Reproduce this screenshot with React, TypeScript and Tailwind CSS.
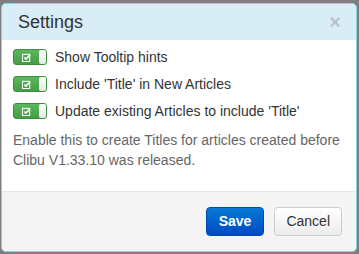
import { useState } from 'react';

const options = [
  'Show Tooltip hints',
  "Include 'Title' in New Articles",
  "Update existing Articles to include 'Title'",
];

function Toggle({ on, onClick }: { on: boolean; onClick: () => void }) {
  return (
    <button
      onClick={onClick}
      className={`flex h-[16px] w-[34px] overflow-hidden rounded-[3px] border ${on ? 'border-[#3e8f3e] bg-gradient-to-b from-[#5cb85c] to-[#449d44]' : 'border-[#ccc] bg-[#eee]'}`}
    >
      <span className="flex h-full w-[25px] items-center justify-center">
        <svg width="9" height="9" viewBox="0 0 10 10">
          <rect x="0.5" y="1.5" width="8" height="8" fill="none" stroke="#fff" strokeWidth="1.2" />
          <path d="M2.5 5 L4.3 6.8 L9 2" fill="none" stroke="#fff" strokeWidth="1.6" />
        </svg>
      </span>
      <span className="h-full flex-1 rounded-l-[2px] bg-gradient-to-b from-[#fff] to-[#e6e6e6]" />
    </button>
  );
}

export default function App() {
  const [checked, setChecked] = useState([true, true, true]);

  return (
    <div className="h-[254px] w-[359px] bg-[#7f7f7f] pt-[3px] pl-[1px] font-['Liberation_Sans',Arial,sans-serif]">
      <div className="flex h-[249px] w-[356px] flex-col overflow-hidden rounded-[5px] border border-[#7fd8e0] bg-white">
        <div className="flex h-[36px] items-center justify-between bg-[#d9edf7] pl-[16px] pr-[15px]">
          <span className="text-[18px] text-[#333]">Settings</span>
          <span className="text-[20px] font-bold leading-none text-[#b9c4ca]">×</span>
        </div>
        <div className="flex flex-1 flex-col gap-[11px] px-[11px] pt-[9px]">
          {options.map((label, i) => (
            <div key={label} className="flex h-[16px] items-center gap-[8px]">
              <Toggle on={checked[i]} onClick={() => setChecked(checked.map((c, j) => (j === i ? !c : c)))} />
              <span className="text-[14px] text-[#333]">{label}</span>
            </div>
          ))}
          <p className="text-[14px] leading-[20px] text-[#666]">
            Enable this to create Titles for articles created before Clibu V1.33.10 was released.
          </p>
        </div>
        <div className="flex h-[60px] items-center justify-end gap-[10px] border-t border-[#e5e5e5] bg-[#f4f4f4] pr-[14px]">
          <button className="h-[29px] rounded-[4px] border border-[#0049a8] bg-gradient-to-b from-[#0a7ad6] to-[#0049c2] px-[12px] text-[14px] font-bold text-white">
            Save
          </button>
          <button className="h-[29px] rounded-[4px] border border-[#ccc] bg-gradient-to-b from-[#fff] to-[#ececec] px-[11px] text-[14px] text-[#333]">
            Cancel
          </button>
        </div>
      </div>
    </div>
  );
}
